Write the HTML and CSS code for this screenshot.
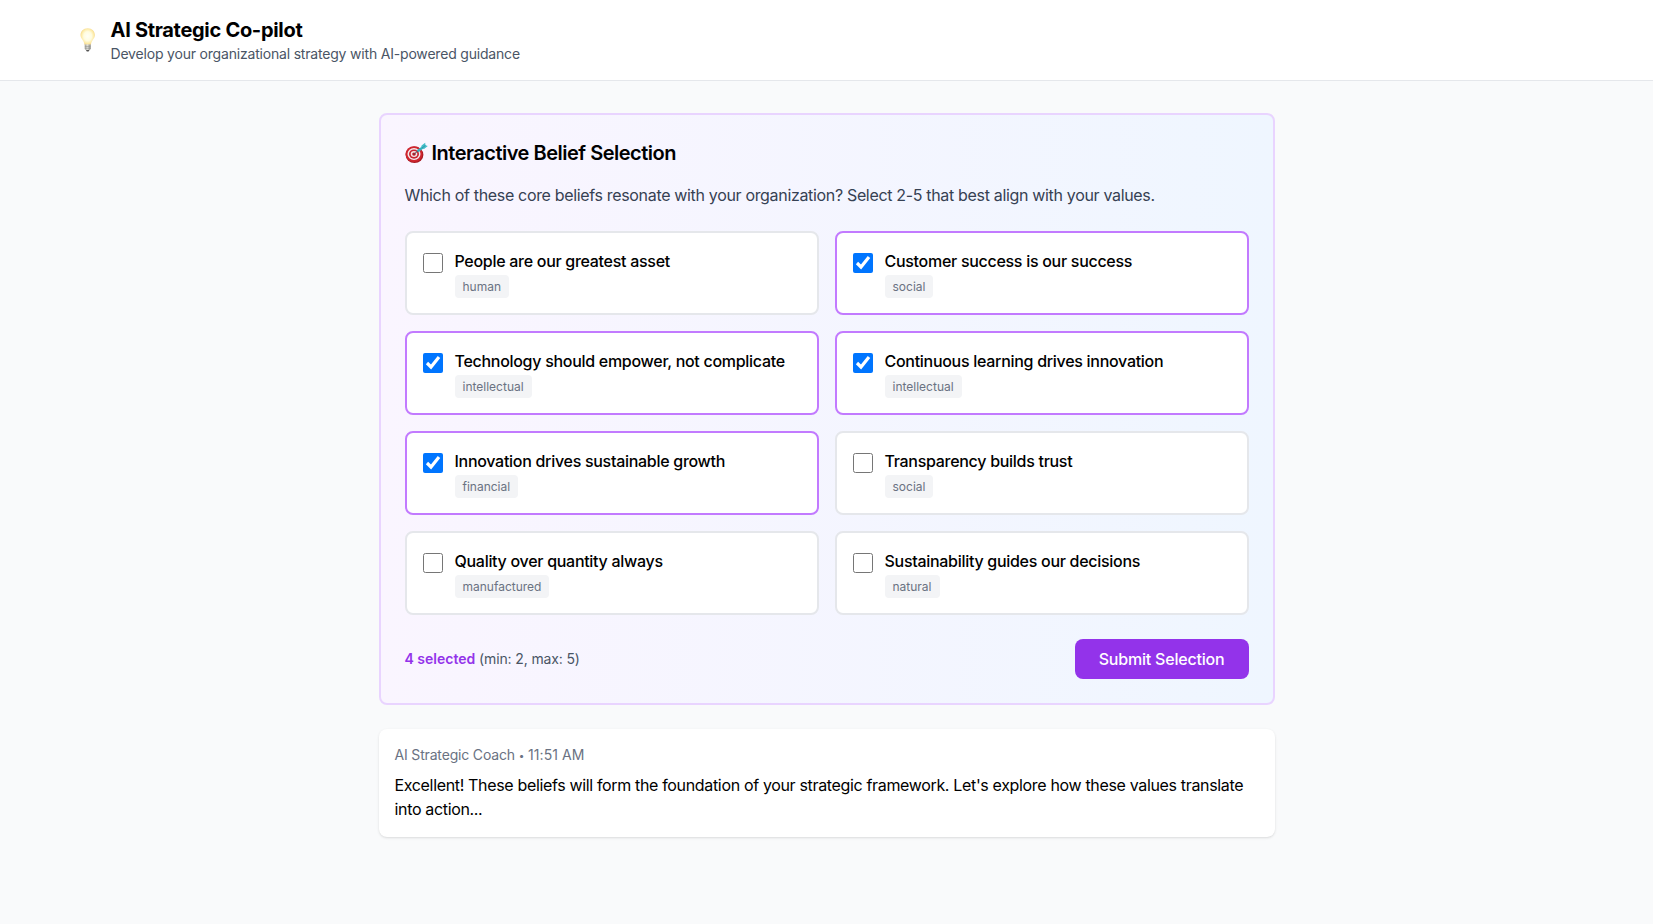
FILE: index.html
```html
<!DOCTYPE html>
<html lang="en">
<head>
<meta charset="utf-8">
<title>AI Strategic Co-pilot</title>
<link rel="stylesheet" href="styles.css">
</head>
<body>
<header class="header">
  <div class="header-inner">
    <svg class="bulb" viewBox="0 0 24 32" aria-hidden="true">
      <defs>
        <radialGradient id="glow" cx=".5" cy=".48" r=".55">
          <stop offset="0" stop-color="#fffff6"/><stop offset=".5" stop-color="#fffce0"/><stop offset=".8" stop-color="#fdeaa5"/><stop offset="1" stop-color="#efcf85"/>
        </radialGradient>
        <linearGradient id="base"><stop offset="0" stop-color="#9b9b96"/><stop offset=".45" stop-color="#deded8"/><stop offset="1" stop-color="#84847f"/></linearGradient>
      </defs>
      <path d="M12.700 4.200c-4.300 0-7.200 3-7.200 6.900 0 3.800 3.500 5.200 4 9.700h6.400c.5-4.500 4-5.900 4-9.700 0-3.900-2.900-6.900-7.200-6.900z" fill="url(#glow)"/>
      <path d="M9.700 20.600h6v4.400l-1.500 1.400h-3l-1.500-1.400z" fill="url(#base)"/>
      <path d="M9.900 22.500h5.600M10 24.300h5.400" stroke="#8f8f89" stroke-width=".5"/>
      <path d="M11 26h3.400l-.8 1.600h-1.800z" fill="#555"/>
    </svg>
    <div>
      <h1 class="brand">AI Strategic Co-pilot</h1>
      <p class="tagline">Develop your organizational strategy with AI-powered guidance</p>
    </div>
  </div>
</header>
<main class="main">
  <section class="panel">
    <h2 class="panel-title">
      <svg class="target" viewBox="0 0 24 22" aria-hidden="true">
        <ellipse cx="9.500" cy="12.800" rx="8.900" ry="8.300" fill="#a71922"/>
        <ellipse cx="9" cy="12.100" rx="8.500" ry="7.900" fill="#cf252e"/>
        <ellipse cx="9" cy="12.100" rx="6.500" ry="6" fill="#f4e9ec"/>
        <ellipse cx="9" cy="12.100" rx="5" ry="4.600" fill="#c92630"/>
        <ellipse cx="9" cy="12.100" rx="3.300" ry="3" fill="#f4e4e6"/>
        <ellipse cx="9" cy="12.100" rx="1.800" ry="1.600" fill="#b51c26"/>
        <path d="M9 12 13 9" stroke="#5b4a52" stroke-width="1"/>
        <path d="M12.500 9.300 18 5.300" stroke="#35aebb" stroke-width="2.400"/>
        <path d="M16 6 16.600 3.500 20.200.8 20.400 3.200 22.800 3.900 19 7z" fill="#43bdc9"/>
        <path d="M17 6 20.600 3.300" stroke="#227f91" stroke-width=".6"/>
      </svg>
      <span>Interactive Belief Selection</span>
    </h2>
    <p class="question">Which of these core beliefs resonate with your organization? Select 2-5 that best align with your values.</p>
    <div class="beliefs">
      <label class="belief"><input type="checkbox"><span class="body"><span class="name">People are our greatest asset</span><span class="tag">human</span></span></label>
      <label class="belief selected"><input type="checkbox" checked><span class="body"><span class="name">Customer success is our success</span><span class="tag">social</span></span></label>
      <label class="belief selected"><input type="checkbox" checked><span class="body"><span class="name">Technology should empower, not complicate</span><span class="tag">intellectual</span></span></label>
      <label class="belief selected"><input type="checkbox" checked><span class="body"><span class="name">Continuous learning drives innovation</span><span class="tag">intellectual</span></span></label>
      <label class="belief selected"><input type="checkbox" checked><span class="body"><span class="name">Innovation drives sustainable growth</span><span class="tag">financial</span></span></label>
      <label class="belief"><input type="checkbox"><span class="body"><span class="name">Transparency builds trust</span><span class="tag">social</span></span></label>
      <label class="belief"><input type="checkbox"><span class="body"><span class="name">Quality over quantity always</span><span class="tag">manufactured</span></span></label>
      <label class="belief"><input type="checkbox"><span class="body"><span class="name">Sustainability guides our decisions</span><span class="tag">natural</span></span></label>
    </div>
    <div class="actions">
      <p class="count"><strong>4 selected</strong> (min: 2, max: 5)</p>
      <button class="submit" type="button">Submit Selection</button>
    </div>
  </section>
  <article class="message">
    <p class="meta">AI Strategic Coach <span class="dot">•</span> <span class="time">11:51 AM</span></p>
    <p class="text">Excellent! These beliefs will form the foundation of your strategic framework. Let's explore how these values translate into action...</p>
  </article>
</main>
</body>
</html>
```
FILE: styles.css
```css
* { box-sizing: border-box; margin: 0; padding: 0; }
body { min-height: 100vh; background: #f9fafb; color: #000; font: 16px/24px Inter, sans-serif; }
.header { background: #fff; border-bottom: 1px solid #e5e7eb; }
.header-inner { max-width: 1536px; margin: 0 auto; padding: 16px; display: flex; align-items: center; gap: 8px; }
.bulb { width: 24px; height: 32px; margin-right: 4px; }
.brand { font-size: 20px; line-height: 28px; font-weight: 700; letter-spacing: -.3px; }
.tagline { font-size: 14px; line-height: 20px; color: #4a5565; letter-spacing: -.19px; }
.main { max-width: 896px; margin: 32px auto 0; display: flex; flex-direction: column; gap: 24px; }
.panel { border: 2px solid #e9d4ff; border-radius: 8px; padding: 24px; background: linear-gradient(to right, #faf5ff, #eff6ff); }
.panel-title { display: flex; align-items: center; gap: 3px; font-size: 20px; line-height: 28px; font-weight: 600; letter-spacing: -.49px; margin-bottom: 16px; }
.target { width: 24px; height: 22px; }
.question { color: #364153; letter-spacing: -.33px; margin-bottom: 24px; }
.beliefs { display: grid; grid-template-columns: 1fr 1fr; gap: 16px; }
.belief { display: flex; align-items: flex-start; gap: 12px; height: 84px; padding: 16px; background: #fff; border: 2px solid #e5e7eb; border-radius: 8px; }
.belief.selected { border-color: #c27aff; }
.belief input { width: 20px; height: 20px; margin-top: 4px; }
.body { display: flex; flex-direction: column; align-items: flex-start; gap: 2px; }
.name { font-weight: 500; letter-spacing: -.29px; }
.tag { padding: 4px 8px; font-size: 12px; line-height: 15px; color: #6a7282; background: #f3f4f6; border-radius: 4px; }
.actions { display: flex; justify-content: space-between; align-items: center; margin-top: 24px; }
.count { font-size: 14px; line-height: 20px; color: #4a5565; letter-spacing: -.13px; }
.count strong { font-weight: 600; color: #9333ea; letter-spacing: 0; }
.submit { height: 40px; padding: 0 24px; border: 0; border-radius: 8px; background: #9333ea; color: #fff; font: 500 16px/24px Inter, sans-serif; letter-spacing: -.2px; }
.message { padding: 16px; background: #fff; border-radius: 8px; box-shadow: 0 1px 3px rgba(0,0,0,.1), 0 1px 2px -1px rgba(0,0,0,.1); }
.meta { font-size: 14px; line-height: 20px; color: #6a7282; letter-spacing: -.17px; margin-bottom: 8px; }
.dot { font-size: 10px; vertical-align: 1px; line-height: 1; }
.time { letter-spacing: .1px; }
.text { letter-spacing: -.34px; }
```
